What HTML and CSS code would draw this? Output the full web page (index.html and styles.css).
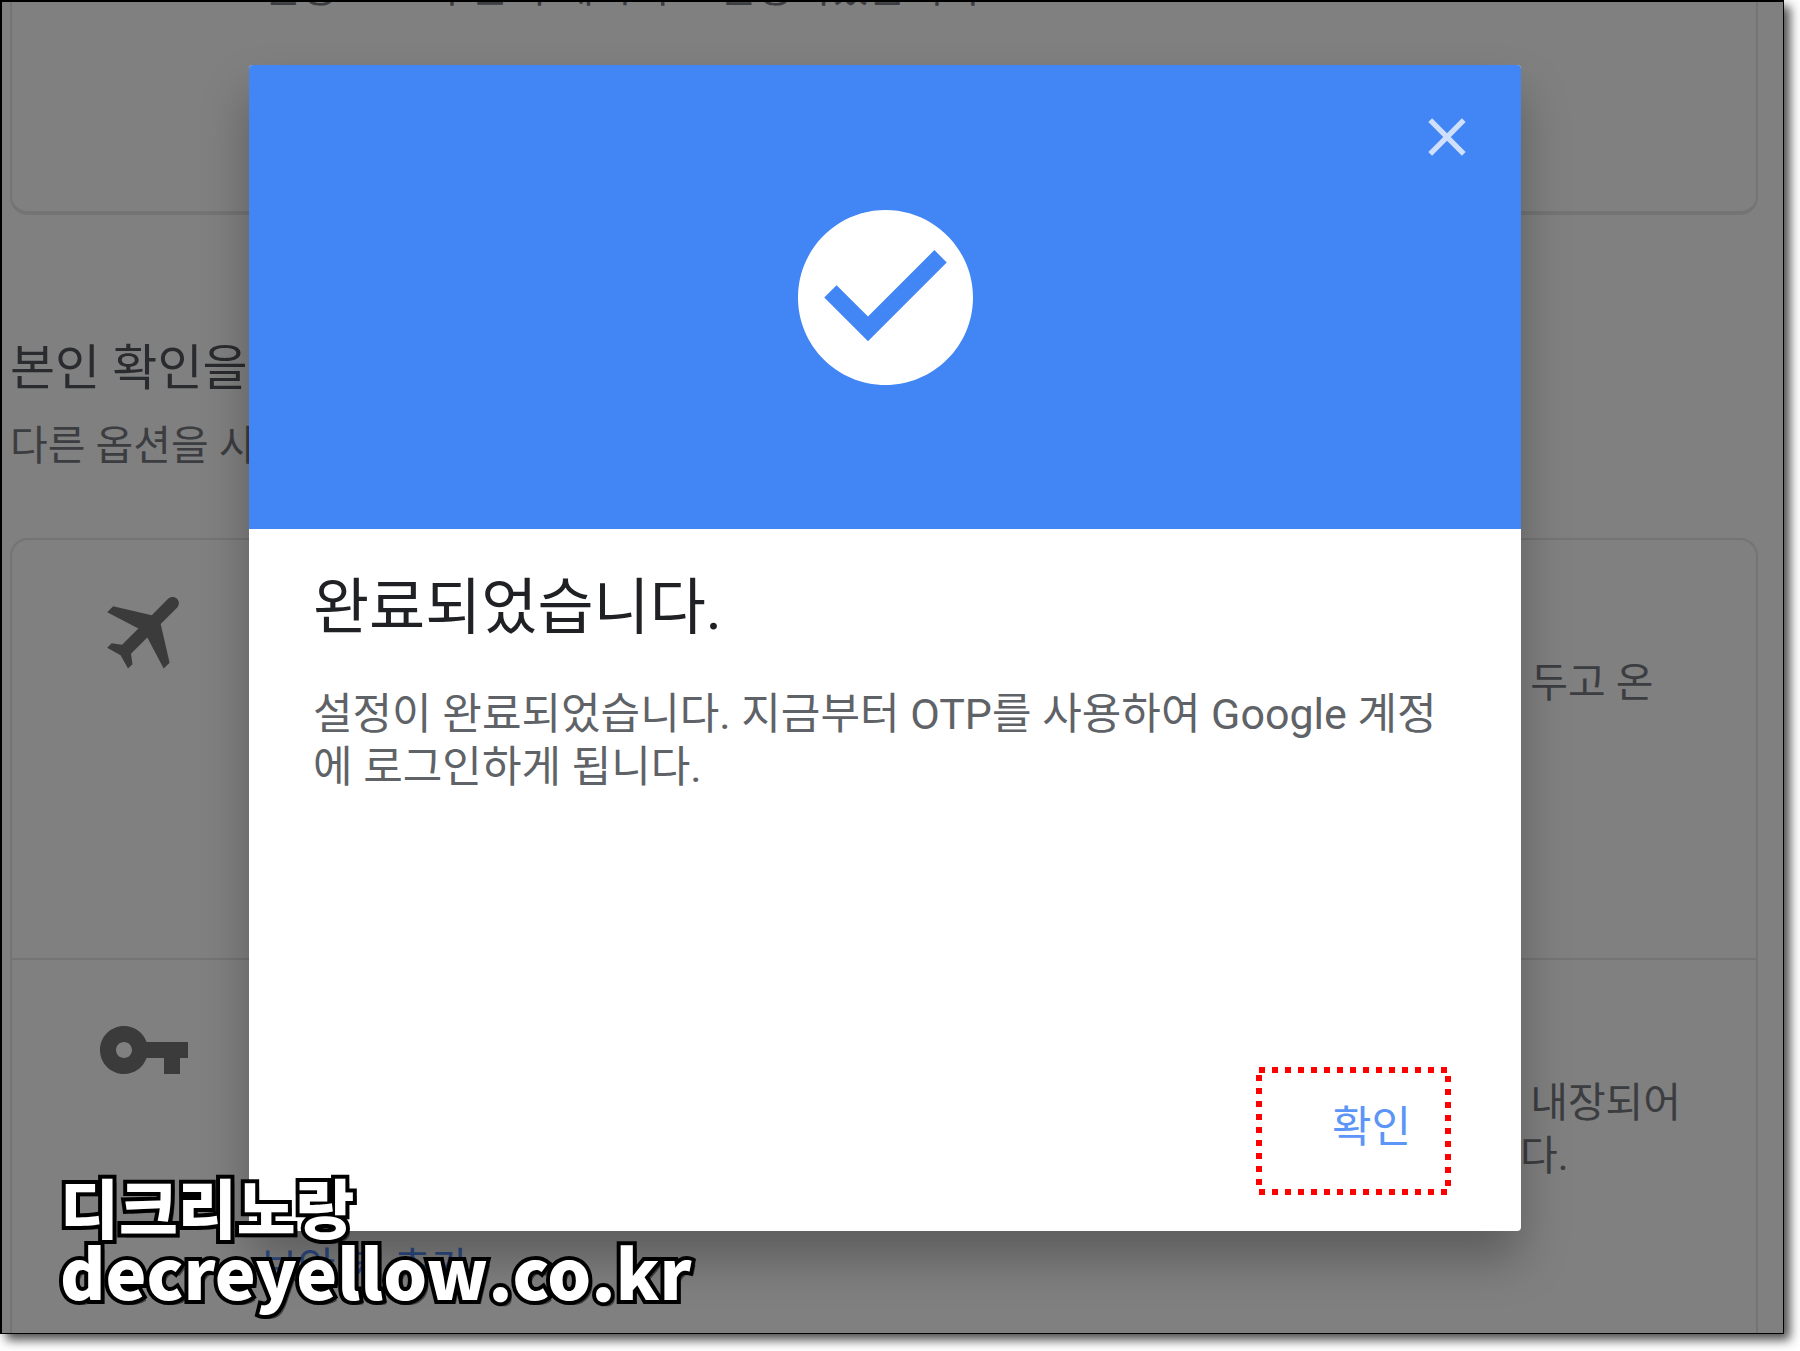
FILE: index.html
```html
<!DOCTYPE html>
<html lang="ko">
<head>
    <meta charset="UTF-8">
    <meta name="viewport" content="width=device-width, initial-scale=1.0">
    <title>2단계 인증</title>
    <link rel="stylesheet" href="styles.css">
</head>
<body>
    <div class="window">
        <main class="page">
            <section class="card card-top">
                <p>설정 코드 부분이 메시지로 설정되었습니다.</p>
            </section>

            <section class="intro">
                <h2>본인 확인을</h2>
                <p>다른 옵션을 사</p>
            </section>

            <section class="card card-list">
                <div class="option">
                    <svg class="option-icon" viewBox="0 0 24 24" aria-hidden="true">
                        <path transform="translate(1.2 0) rotate(45 12 12) translate(-0.6 -0.6) scale(1.05)" d="M21 16v-2l-8-5V3.5c0-.83-.67-1.5-1.5-1.5S10 2.67 10 3.5V9l-8 5v2l8-2.5V19l-2 1.5V22l3.5-1 3.5 1v-1.5L13 19v-5.5l8 2.5z"/>
                    </svg>
                    <p class="option-text"> 두고 온</p>
                </div>
                <div class="option">
                    <svg class="option-icon" viewBox="0 0 24 24" aria-hidden="true">
                        <path d="M12.65 10C11.83 7.67 9.61 6 7 6c-3.31 0-6 2.69-6 6s2.69 6 6 6c2.61 0 4.83-1.67 5.65-4H17v4h4v-4h2v-4H12.65zM7 14c-1.1 0-2-.9-2-2s.9-2 2-2 2 .9 2 2-.9 2-2 2z"/>
                    </svg>
                    <a class="option-link" href="#">보안 키 추가</a>
                    <p class="option-text"> 내장되어
다.</p>
                </div>
            </section>
        </main>

        <div class="overlay">
            <div class="dialog" role="dialog" aria-labelledby="dialogTitle">
                <div class="dialog-header">
                    <button type="button" class="close" aria-label="닫기">
                        <svg viewBox="0 0 24 24" aria-hidden="true">
                            <path d="M19 6.41L17.59 5 12 10.59 6.41 5 5 6.41 10.59 12 5 17.59 6.41 19 12 13.41 17.59 19 19 17.59 13.41 12z"/>
                        </svg>
                    </button>
                    <svg class="check" viewBox="2 2 20 20" aria-hidden="true">
                        <path d="M12 2C6.48 2 2 6.48 2 12s4.48 10 10 10 10-4.48 10-10S17.52 2 12 2zm-2 15l-5-5 1.41-1.41L10 14.17l7.59-7.59L19 8l-9 9z"/>
                    </svg>
                </div>
                <div class="dialog-body">
                    <h1 id="dialogTitle">완료되었습니다.</h1>
                    <p>설정이 완료되었습니다. 지금부터 OTP를 사용하여 Google 계정에 로그인하게 됩니다.</p>
                </div>
                <div class="dialog-actions">
                    <button type="button" class="confirm">확인</button>
                    <svg class="marker" viewBox="0 0 195 128" aria-hidden="true">
                        <rect x="3" y="3" width="189" height="122"/>
                    </svg>
                </div>
            </div>
        </div>

        <div class="watermark">
            <p>디크리노랑</p>
            <p class="watermark-url">decreyellow.co.kr</p>
        </div>
    </div>
</body>
</html>
```

FILE: styles.css
```css
* {
    box-sizing: border-box;
}

body {
    margin: 0;
    height: 100vh;
    padding: 0 16px 17px 0;
    background: #fff;
    font-family: Roboto, "Noto Sans CJK KR", sans-serif;
}

h1, h2, p {
    margin: 0;
    font-weight: 400;
}

button {
    border: none;
    background: none;
    font-family: inherit;
    cursor: pointer;
}

.window {
    position: relative;
    height: 100%;
    overflow: hidden;
    border: 1px solid #000;
    border-width: 2px 1px 1px 2px;
    background: #808080;
    box-shadow: 6px 6px 10px rgba(0, 0, 0, 0.7);
}

/* Page behind the dialog */
.page {
    display: flex;
    flex-direction: column;
    height: 100%;
    padding: 0 25px 0 8px;
    font-size: 41px;
    line-height: 53px;
    color: #3c3d40;
}

.card {
    border: 2px solid #747474;
    border-radius: 18px;
}

.card-top {
    flex: none;
    height: 213px;
    border-top: none;
    border-bottom-width: 4px;
    border-radius: 0 0 18px 18px;
    padding-left: 250px;
}

.card-top p {
    margin-top: -40px;
}

.intro {
    flex: none;
    height: 323px;
    padding-top: 122px;
}

.intro h2 {
    font-size: 49px;
    line-height: 64px;
    color: #2a2b2e;
}

.intro p {
    margin-top: 19px;
}

.card-list {
    flex: 1;
    border-bottom: none;
    border-radius: 18px 18px 0 0;
}

.option {
    display: flex;
    align-items: flex-start;
    height: 418px;
    padding: 42px 0 0 84px;
}

.option + .option {
    height: auto;
    border-top: 2px solid #747474;
}

.option-icon {
    flex: none;
    width: 96px;
    height: 96px;
    fill: #3b3b3b;
}

.option-text {
    width: 236px;
    margin: 75px 0 0 auto;
    white-space: pre;
}

.option-link {
    margin: 240px 0 0 68px;
    color: #2c4a80;
    text-decoration: none;
}

/* Dialog */
.overlay {
    position: absolute;
    inset: 0;
    padding: 63px 262px 102px 247px;
}

.dialog {
    display: flex;
    flex-direction: column;
    height: 100%;
    border-radius: 4px;
    overflow: hidden;
    background: #fff;
    box-shadow: 0 28px 48px rgba(0, 0, 0, 0.28);
}

.dialog-header {
    position: relative;
    display: flex;
    align-items: center;
    justify-content: center;
    height: 464px;
    background: #4285f4;
}

.check {
    width: 175px;
    height: 175px;
    fill: #fff;
}

.close {
    position: absolute;
    top: 40px;
    right: 42px;
    width: 64px;
    height: 64px;
    padding: 0;
}

.close svg {
    display: block;
    fill: #d0e0fc;
}

.dialog-body {
    flex: 1;
    padding: 43px 64px 0;
}

.dialog-body h1 {
    font-size: 61px;
    line-height: 72px;
    color: #202124;
}

.dialog-body p {
    margin-top: 44px;
    font-size: 43px;
    line-height: 53px;
    color: #5f6368;
    word-break: break-all;
}

.dialog-actions {
    position: relative;
    display: flex;
    justify-content: flex-end;
    padding: 0 70px 36px 0;
}

.confirm {
    width: 195px;
    height: 128px;
    padding: 0 40px 16px 0;
    font-size: 43px;
    text-align: right;
    color: #5b95f7;
}

.marker {
    position: absolute;
    top: 0;
    right: 70px;
    width: 195px;
    height: 128px;
    fill: none;
    stroke: #f00;
    stroke-width: 6;
    stroke-dasharray: 6 7;
    pointer-events: none;
}

.watermark {
    position: absolute;
    left: 58px;
    bottom: 30px;
    font-family: "Noto Sans CJK KR", sans-serif;
    font-size: 64px;
    line-height: 65px;
    color: #fff;
    -webkit-text-stroke: 8px #000;
    paint-order: stroke fill;
    text-shadow: 4px 4px 0 rgba(0, 0, 0, 0.5);
}

.watermark p {
    font-weight: 900;
}

.watermark .watermark-url {
    font-size: 69px;
}
```
